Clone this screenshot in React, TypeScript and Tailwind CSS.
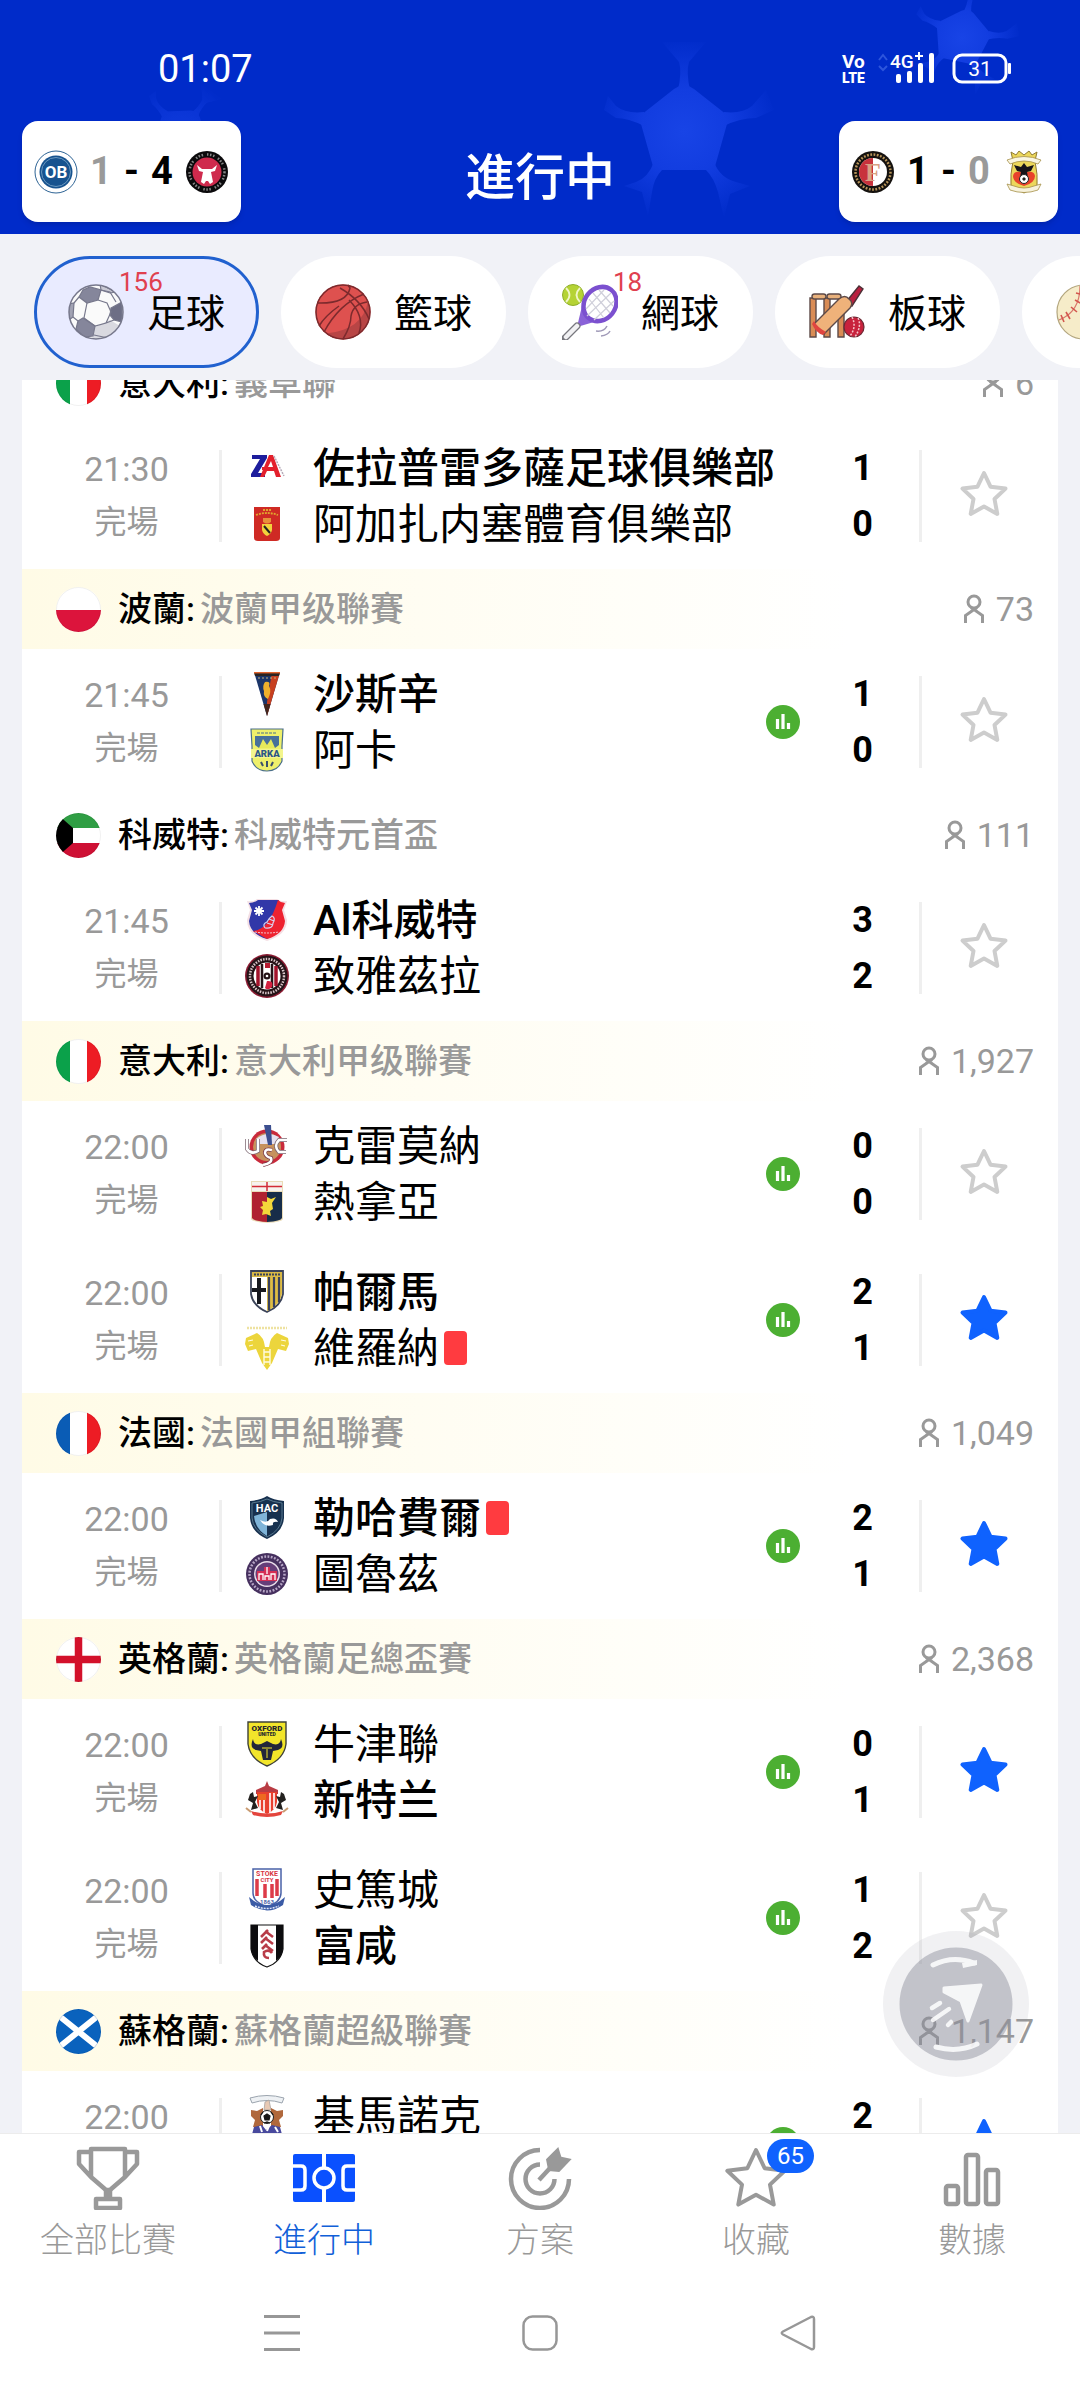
import React from 'react'

type Team = { name: string; logo: React.ReactNode; score: number; win?: boolean; red?: boolean }
type Match = { time: string; home: Team; away: Team; stats?: boolean; fav?: boolean }
type League = {
    country: string
    name: string
    flag: React.ReactNode
    viewers: string
    highlight?: boolean
    matches: Match[]
}

const STAR = 'M24 3L30.5 16.7 45.5 18.6 34.5 29 37.3 43.9 24 36.6 10.7 43.9 13.5 29 2.5 18.6 17.5 16.7Z'

function Logo({ children }: { children: React.ReactNode }) {
    return (
        <svg viewBox="0 0 44 44" className="size-11 shrink-0 overflow-visible" fontFamily="Roboto, sans-serif" textAnchor="middle">
            {children}
        </svg>
    )
}

function Flag({ id, children }: { id: string; children: React.ReactNode }) {
    return (
        <svg viewBox="0 0 45 45" className="size-[45px] shrink-0">
            <clipPath id={id}>
                <circle cx="22.5" cy="22.5" r="22.5" />
            </clipPath>
            <g clipPath={`url(#${id})`}>
                <rect width="45" height="45" fill="#fff" />
                {children}
            </g>
            <circle cx="22.5" cy="22.5" r="22" fill="none" stroke="#000" strokeOpacity=".06" />
        </svg>
    )
}

// flags
const italy = (id: string) => (
    <Flag id={id}>
        <rect width="14" height="45" fill="#0ba14a" />
        <rect x="31" width="14" height="45" fill="#ed1c24" />
    </Flag>
)
const poland = (
    <Flag id="pl">
        <rect y="23" width="45" height="22" fill="#dc143c" />
    </Flag>
)
const kuwait = (
    <Flag id="kw">
        <rect width="45" height="15" fill="#2f9e44" />
        <rect y="30" width="45" height="15" fill="#ce1034" />
        <path d="M0 0L17 15V30L0 45Z" fill="#000" />
    </Flag>
)
const france = (
    <Flag id="fr">
        <rect width="14" height="45" fill="#0a5cb5" />
        <rect x="31" width="14" height="45" fill="#ed1c24" />
    </Flag>
)
const england = (
    <Flag id="en">
        <path d="M22.5 0V45M0 22.5H45" stroke="#d3112b" strokeWidth="7.5" />
    </Flag>
)
const scotland = (
    <Flag id="sc">
        <rect width="45" height="45" fill="#0a62bd" />
        <path d="M2 6L43 39M43 6L2 39" stroke="#fff" strokeWidth="6" />
    </Flag>
)

// club crests
const zaragoza = (
    <Logo>
        <path d="M7 9H22V12L13 27H20V31H6V28L15 13H7Z" fill="#1d1d9c" />
        <path d="M24 9H28L36 31H31L29 25H22L19 31H15ZM26 15L23 21H28Z" fill="#e3202c" />
        <path d="M17 21H29V24H17Z" fill="#e3202c" />
        <path d="M29 10L39 30" stroke="#b5aab8" strokeWidth="1.5" strokeDasharray="2 1" />
    </Logo>
)
const agazzanese = (
    <Logo>
        <path d="M9 5H35V36Q35 39 31 39H13Q9 39 9 36Z" fill="#cf2a24" />
        <path d="M18 8H26M11 13Q22 9 33 13" stroke="#e0a52e" strokeWidth="1.800" fill="none" strokeDasharray="2 1" />
        <path d="M18 16H26V20Q22 23 18 20Z" fill="#e8913a" />
        <path d="M17 22H27V28Q26 32 22 34Q18 32 17 28Z" fill="#f2d33c" />
        <path d="M19 24L25 31" stroke="#222" strokeWidth="2" />
    </Logo>
)
const szczecin = (
    <Logo>
        <path d="M9 0H35L22 44Z" fill="#1b3569" />
        <path d="M27 0H35L22 44V30Z" fill="#c63f1f" />
        <path d="M18.500 32H25.500L22 44Z" fill="#44251b" />
        <path d="M9 0H35L34 4H10Z" fill="#2a2422" />
        <path d="M9 .7H35" stroke="#e0632b" strokeWidth="1.400" />
        <path d="M20 10Q26 9 24 14Q27 19 23 27Q18 25 19 19Q17 14 20 10Z" fill="#eeb02c" />
        <path d="M13 6H31" stroke="#c9b27b" strokeDasharray="2 2" />
    </Logo>
)
const arka = (
    <Logo>
        <path d="M6 1H38L37 18V33Q33 43 22 43Q11 43 7 33V18Z" fill="#eef06b" stroke="#4a6f8a" strokeWidth="1.200" />
        <path d="M10 8H34V17L30 20H14L10 17Z" fill="#47709a" />
        <path d="M14 20L18 11L22 17L26 11L30 20Z" fill="#e6e95b" />
        <path d="M12 5H32" stroke="#4a6f8a" strokeDasharray="3 1" />
        <rect x="6" y="21" width="32" height="9" fill="#f3f58d" />
        <text x="22" y="29" fontSize="9.500" fontWeight="900" fill="#2b5687">ARKA</text>
        <path d="M16 34L18 38M22 33V39M28 34L26 38" stroke="#39506b" strokeWidth="2" />
    </Logo>
)
const kuwaitSc = (
    <Logo>
        <path d="M2 3Q8 4 12 1H32Q36 4 42 3L39 12L42 22Q42 37 22 43Q2 37 2 22L5 12Z" fill="#f4dfe4" />
        <path d="M4 5Q9 5 13 2H34L24 40L22 41Q5 36 4 23L7 12Z" fill="#3137a8" />
        <path d="M33 2Q36 5 40 5L37 12L40 23Q39 36 22 41L8 33Q24 32 33 2Z" fill="#ee2230" />
        <path d="M14 8V18M9 13H19M10.500 9.500L17.500 16.500M17.500 9.500L10.500 16.500" stroke="#fff" strokeWidth="1.800" />
        <path d="M20 30Q17 26 22 24Q24 20 27 18Q31 20 28 25Q28 31 20 30M22 25L28 27M24 21L29 23" fill="none" stroke="#d9d2ee" strokeWidth="1.200" />
        <path d="M10 34Q22 36 34 34" stroke="#f3c5cf" fill="none" strokeDasharray="2 1" />
    </Logo>
)
const jazira = (
    <Logo>
        <circle cx="22" cy="22" r="22" fill="#8b1c33" />
        <circle cx="22" cy="22" r="20.500" fill="#251317" />
        <circle cx="22" cy="22" r="17" fill="none" stroke="#d9c6c9" strokeWidth="2.500" strokeDasharray="1.500 1.200" />
        <circle cx="22" cy="22" r="13.500" fill="#fff" />
        <path d="M13 12V32M31 12V32" stroke="#a3142c" strokeWidth="3.500" />
        <path d="M17 10V34M27 10V34" stroke="#251317" strokeWidth="2.500" />
        <path d="M20 9H25V14H20Z" fill="#b81c32" />
        <circle cx="22" cy="22" r="3.500" fill="#251317" />
        <circle cx="22" cy="22" r="1.300" fill="#fff" />
        <path d="M22 27Q29 26 27 33Q23 37 20 34Z" fill="#d32140" />
    </Logo>
)
const cremonese = (
    <Logo>
        <circle cx="22" cy="23" r="17.500" fill="#c92a3b" />
        <circle cx="22" cy="23" r="14" fill="#c6925d" />
        <path d="M11 15Q22 6 34 13L30 20H13Z" fill="#e5e1ef" />
        <path d="M19 1H26L27 21H23Z" fill="#3c4f8f" />
        <path d="M2 15V25Q6 31 13 27V15M42 16H34Q28 22 34 28H41" fill="none" stroke="#7b6670" strokeWidth="4" />
        <path d="M2 15V25Q6 31 13 27V15M42 16H34Q28 22 34 28H41" fill="none" stroke="#fff" strokeWidth="2.500" />
        <path d="M27 26Q20 24 20 29Q21 33 26 34Q28 39 18 41" fill="none" stroke="#7b3a48" strokeWidth="4" />
        <path d="M27 26Q20 24 20 29Q21 33 26 34Q28 39 18 41" fill="none" stroke="#fff" strokeWidth="2.500" />
    </Logo>
)
const genoa = (
    <Logo>
        <path d="M6 1H38V39Q37 42 22 43Q7 42 6 39Z" fill="#eadcb8" />
        <path d="M7 12H22V42Q8 41 7 38Z" fill="#b02230" />
        <path d="M22 12H37V38Q36 41 22 42Z" fill="#172d49" />
        <rect x="7" y="2" width="30" height="9" fill="#f7f3ee" />
        <path d="M22 2V11M7 6.500H37" stroke="#d22b37" strokeWidth="1.500" />
        <path d="M22 17L26 19L31 17L27 23L28 29L25 31L26 36L21 34L17 35L18 30L15 27L18 26L17 21L22 22Z" fill="#f4d83a" />
    </Logo>
)
const parma = (
    <Logo>
        <path d="M6 1H38V24Q36 36 22 42Q8 36 6 24Z" fill="#fff" stroke="#3b4358" strokeWidth="1.800" />
        <rect x="7" y="2" width="30" height="5" fill="#d9b945" />
        <path d="M9 4.500H35" stroke="#3b4358" strokeWidth="2" strokeDasharray="2 1" />
        <path d="M14 8V34M7 20H21" stroke="#17191f" strokeWidth="4" />
        <path d="M22 7H37V24Q35 35 22 41Z" fill="#dfbd44" />
        <path d="M24 7V40M29 7V37M34 7V32" stroke="#39415c" strokeWidth="2.200" />
    </Logo>
)
const verona = (
    <Logo>
        <path d="M2 2H42" stroke="#eee2a1" strokeWidth="2.500" strokeDasharray="2 1" />
        <path d="M1 12L12 7Q19 11 20 21H24Q25 11 32 7L43 12L44 18L41 25L33 23L27 37L22 44L17 37L11 23L3 25L0 18Z" fill="#ecd53c" />
        <path d="M19 23V39M25 23V39M19 26H25M19 31H25M19 36H25" stroke="#fffbe0" strokeWidth="1.400" />
        <path d="M3 15L8 14M41 15L36 14M4 20L8 19M40 20L36 19" stroke="#fffbe0" strokeWidth="1.200" />
    </Logo>
)
const havre = (
    <Logo>
        <path d="M22 0Q28 4 39 5V22Q38 36 22 43Q6 36 5 22V5Q16 4 22 0Z" fill="#17314f" />
        <path d="M22 3Q28 6 37 7V22Q36 34 22 41Q8 34 7 22V7Q16 6 22 3Z" fill="none" stroke="#58798f" />
        <path d="M9 20L22 16V40Q10 33 9 20Z" fill="#7fb4d8" />
        <text x="22" y="16" fontSize="11" fontWeight="700" fill="#fff">HAC</text>
        <path d="M15 24Q22 28 25 23Q31 21 33 26Q27 25 28 29Q20 32 15 24Z" fill="#fff" />
    </Logo>
)
const toulouse = (
    <Logo>
        <circle cx="22" cy="22" r="21" fill="#46305f" />
        <circle cx="22" cy="22" r="17.500" fill="none" stroke="#b7a6c6" strokeWidth="2.500" strokeDasharray="1.800 1.500" />
        <circle cx="22" cy="22" r="13" fill="#e9ddea" />
        <circle cx="22" cy="22" r="11.500" fill="#653e79" />
        <path d="M12 19H19V15H25V19H32V29H12Z" fill="#d42f55" />
        <path d="M14 28V22H18V28M20 28V24H24V28M26 28V22H30V28M22 15V22" stroke="#fff" strokeWidth="1.300" fill="none" />
    </Logo>
)
const oxford = (
    <Logo>
        <path d="M3 0H41V22Q39 37 22 44Q5 37 3 22Z" fill="#f2e52a" stroke="#3e4138" strokeWidth="1.400" />
        <text x="22" y="9" fontSize="8" fontWeight="900" fill="#24262d">OXFORD</text>
        <text x="22" y="14" fontSize="5" fontWeight="900" fill="#24262d">UNITED</text>
        <path d="M8 17Q9 24 16 22L22 19L28 22Q35 24 36 17Q40 26 33 28L28 29L26 38H18L16 29L11 28Q4 26 8 17Z" fill="#22263a" />
        <path d="M17 26H27M22 27V36" stroke="#f2e52a" />
    </Logo>
)
const sunderland = (
    <Logo>
        <path d="M22 3L24 8L33 12V16H11V12L20 8Z" fill="#b93c44" />
        <path d="M12 14H32V24Q31 32 22 36Q13 32 12 24Z" fill="#e8402f" />
        <path d="M15 21V31M19 22V35M25 15V35M29 15V31" stroke="#fff" strokeWidth="1.600" />
        <path d="M13 16H21V22H13Z" fill="#ee6a21" />
        <path d="M5 16L8 14L9 19L13 18L10 24L13 30L6 32L8 25L3 22Z" fill="#23211f" />
        <path d="M39 16L36 14L35 19L31 18L34 24L31 30L38 32L36 25L41 22Z" fill="#23211f" />
        <path d="M6 33Q22 38 38 33L36 37Q22 41 8 37Z" fill="#e4453d" />
        <path d="M1 30L6 34M43 30L38 34" stroke="#c99b72" strokeWidth="2" />
    </Logo>
)
const stoke = (
    <Logo>
        <path d="M8 1H36V25Q36 34 22 39Q8 34 8 25Z" fill="#fff" stroke="#4a62a8" strokeWidth="1.500" />
        <text x="22" y="8" fontSize="7" fontWeight="700" fill="#d8353f">STOKE</text>
        <text x="22" y="14" fontSize="6" fontWeight="700" fill="#d8353f">CITY</text>
        <path d="M12 11V28M20 16V30M27 16V30M32 11V28" stroke="#dd3b48" strokeWidth="3.500" />
        <text x="22" y="36" fontSize="6" fontWeight="700" fill="#4a62a8">1863</text>
        <path d="M4 29L9 33Q22 41 35 33L40 29L38 37Q22 48 6 37Z" fill="#3b5ba6" />
        <path d="M10 38Q22 43 34 38" stroke="#dfe6f7" fill="none" strokeWidth="1.500" strokeDasharray="2 1" />
    </Logo>
)
const fulham = (
    <Logo>
        <path d="M6 1H38V25Q36 38 22 43Q8 38 6 25Z" fill="#fff" stroke="#111" strokeWidth="1.200" />
        <path d="M6 1H13V37Q7 33 6 25ZM31 1H38V25Q37 33 31 37Z" fill="#0c0c0e" />
        <path d="M23 6L16 13M20 7L28 13M22 13L16 19M20 14L28 20M22 20L17 25M20 21L28 27M27 29Q24 25 19 28Q18 34 24 34" fill="none" stroke="#b83c48" strokeWidth="2.600" />
    </Logo>
)
const kilmarnock = (
    <Logo>
        <path d="M5 4Q22 -1 39 4L37 9Q22 4 7 9Z" fill="#eef1f4" stroke="#9ba4ae" />
        <path d="M20 8L24 6L26 16H19Z" fill="#e8c9b4" stroke="#a9a2a0" strokeWidth=".8" />
        <path d="M6 16L12 17L18 14V33H8L10 26L6 22Z" fill="#b0683c" />
        <path d="M38 16L32 17L26 14V33H36L34 26L38 22Z" fill="#b0683c" />
        <circle cx="22" cy="23" r="6.500" fill="#fff" stroke="#222" />
        <path d="M22 20L25 22L24 26H20L19 22ZM16 21L18 18M28 21L26 18M19 29L22 28L25 29" fill="#161616" stroke="#161616" strokeWidth="1.200" />
        <path d="M9 33L17 31L21 36L27 31L35 33L38 44H6Z" fill="#48499d" />
        <path d="M15 32L17 38M24 32L22 37M30 33L33 38" stroke="#fff" strokeWidth="2" fill="none" />
    </Logo>
)
const odense = (
    <Logo>
        <circle cx="22" cy="22" r="21" fill="#fff" stroke="#2e6495" strokeWidth="1" />
        <circle cx="22" cy="22" r="16.500" fill="#17538f" />
        <circle cx="22" cy="22" r="14.500" fill="none" stroke="#7fa9cc" strokeWidth=".8" />
        <text x="22" y="28" fontSize="17" fontWeight="700" fill="#fff">OB</text>
    </Logo>
)
const midtjylland = (
    <Logo>
        <circle cx="22" cy="22" r="21" fill="#0b0a0c" />
        <circle cx="22" cy="22" r="17.500" fill="none" stroke="#888" strokeWidth="2.500" strokeDasharray="1.500 1.600 1.500 1.600 1.500 4" />
        <circle cx="22" cy="22" r="14.500" fill="#cf2a4d" />
        <path d="M12 15L17 19H27L32 15L30 21L26 22L28 32L25 34L23 31H21L19 34L16 32L18 22L14 21Z" fill="#fff" />
    </Logo>
)
const feyenoord = (
    <Logo>
        <circle cx="22" cy="22" r="21" fill="#15120f" />
        <circle cx="22" cy="22" r="17.500" fill="none" stroke="#b8955a" strokeWidth="2.500" strokeDasharray="1.800 1.500" />
        <circle cx="22" cy="22" r="14" fill="#fff" />
        <path d="M22 8A14 14 0 0 0 22 36Z" fill="#c8323c" />
        <text x="22" y="31" fontSize="26" fontFamily="Liberation Serif, serif" fill="#d8a184">F</text>
    </Logo>
)
const eagles = (
    <Logo>
        <path d="M9 2L14 5L17 1L22 5L27 1L30 5L35 2L33 11Q36 25 35 36L22 43L9 36Q8 25 11 11Z" fill="#ecd75b" stroke="#907b33" strokeWidth="1" />
        <path d="M5 10Q22 3 39 10L36 14Q22 8 8 14Z" fill="#faf6e2" stroke="#a69149" strokeWidth=".8" />
        <path d="M11 26Q12 21 18 22H26Q32 21 33 26Q33 33 22 36Q11 33 11 26Z" fill="#e8412c" />
        <path d="M12 15L19 17L22 13L25 17L32 15L29 21L25 22L26 27H18L19 22L15 21Z" fill="#17141a" />
        <circle cx="22" cy="29" r="4.500" fill="#fff" stroke="#222" />
        <path d="M22 27L24 29L22 31L20 29Z" fill="#222" />
        <path d="M5 34L12 36Q22 40 32 36L39 34L36 40Q22 45 8 40Z" fill="#f7f2dc" stroke="#a69149" strokeWidth=".8" />
    </Logo>
)

const leagues: League[] = [
    {
        country: '意大利', name: '義草聯', flag: italy('it1'), viewers: '6',
        matches: [
            {
                time: '21:30',
                home: { name: '佐拉普雷多薩足球俱樂部', logo: zaragoza, score: 1, win: true },
                away: { name: '阿加扎内塞體育俱樂部', logo: agazzanese, score: 0 },
            },
        ],
    },
    {
        country: '波蘭', name: '波蘭甲级聯賽', flag: poland, viewers: '73', highlight: true,
        matches: [
            {
                time: '21:45', stats: true,
                home: { name: '沙斯辛', logo: szczecin, score: 1, win: true },
                away: { name: '阿卡', logo: arka, score: 0 },
            },
        ],
    },
    {
        country: '科威特', name: '科威特元首盃', flag: kuwait, viewers: '111',
        matches: [
            {
                time: '21:45',
                home: { name: 'Al科威特', logo: kuwaitSc, score: 3, win: true },
                away: { name: '致雅茲拉', logo: jazira, score: 2 },
            },
        ],
    },
    {
        country: '意大利', name: '意大利甲级聯賽', flag: italy('it2'), viewers: '1,927', highlight: true,
        matches: [
            {
                time: '22:00', stats: true,
                home: { name: '克雷莫納', logo: cremonese, score: 0 },
                away: { name: '熱拿亞', logo: genoa, score: 0 },
            },
            {
                time: '22:00', stats: true, fav: true,
                home: { name: '帕爾馬', logo: parma, score: 2, win: true },
                away: { name: '維羅納', logo: verona, score: 1, red: true },
            },
        ],
    },
    {
        country: '法國', name: '法國甲組聯賽', flag: france, viewers: '1,049', highlight: true,
        matches: [
            {
                time: '22:00', stats: true, fav: true,
                home: { name: '勒哈費爾', logo: havre, score: 2, win: true, red: true },
                away: { name: '圖魯茲', logo: toulouse, score: 1 },
            },
        ],
    },
    {
        country: '英格蘭', name: '英格蘭足總盃賽', flag: england, viewers: '2,368', highlight: true,
        matches: [
            {
                time: '22:00', stats: true, fav: true,
                home: { name: '牛津聯', logo: oxford, score: 0 },
                away: { name: '新特兰', logo: sunderland, score: 1, win: true },
            },
            {
                time: '22:00', stats: true,
                home: { name: '史篤城', logo: stoke, score: 1 },
                away: { name: '富咸', logo: fulham, score: 2, win: true },
            },
        ],
    },
    {
        country: '蘇格蘭', name: '蘇格蘭超級聯賽', flag: scotland, viewers: '1,147', highlight: true,
        matches: [
            {
                time: '22:00', stats: true, fav: true,
                home: { name: '基馬諾克', logo: kilmarnock, score: 2 },
                away: { name: '', logo: null, score: 2 },
            },
        ],
    },
]

// sport icons
const football = (
    <svg viewBox="0 0 56 56" className="size-14">
        <clipPath id="fb">
            <circle cx="28" cy="28" r="27" />
        </clipPath>
        <circle cx="28" cy="28" r="27" fill="#fafafa" />
        <g clipPath="url(#fb)" stroke="#77788c" strokeWidth="1.200">
            <path d="M27 43L42 36L52 42L44 56H24Z" fill="#d9d9e0" stroke="none" />
            <path d="M15 6L22 3L33 6L30 16L19 19L11 13Z" fill="#85869b" />
            <path d="M43 24L54 18V38L46 36L42 31Z" fill="#6d6e85" />
            <path d="M10 37L15 34L27 42L25 52L16 53L8 45Z" fill="#85869b" />
            <path d="M0 20L6 19L5 33L1 36Z" fill="#a1a2b3" />
            <path d="M32 0L48 8L42 9L33 6Z" fill="#c9c9d4" />
            <path d="M30 16L39 19L43 28L38 39L27 42L16 34L19 19M33 6L42 8L48 18M38 39L46 36M6 19L11 13M5 33L10 37M26 51L40 54" fill="none" />
        </g>
        <circle cx="28" cy="28" r="27" fill="none" stroke="#77788c" strokeWidth="1.500" />
    </svg>
)
const basketball = (
    <svg viewBox="0 0 56 56" className="size-14">
        <circle cx="28" cy="28" r="27.500" fill="#de514f" />
        <path d="M53 17A27.500 27.500 0 0 1 11 49.500Q48 46 53 17Z" fill="#b84545" />
        <g fill="none" stroke="#7c2a2d" strokeWidth="1.500">
            <circle cx="28" cy="28" r="27" />
            <path d="M2 19Q32 20 35 4L33 1M25 4Q46 16 54 35M9 48Q24 20 49 10M28 55Q36 42 36 32Q38 20 52 18M4 42Q10 32 24 22M44 49Q50 32 34 16" />
        </g>
    </svg>
)
const tennis = (
    <svg viewBox="0 0 56 56" className="size-14">
        <circle cx="11" cy="11" r="10.500" fill="#b5d334" stroke="#8fae2a" />
        <path d="M4 4Q11 11 4 18M18 4Q11 11 18 18" fill="none" stroke="#f0f6c8" strokeWidth="1.800" />
        <path d="M20 22L15 43L32 38Z" fill="#8a62d8" />
        <ellipse cx="38" cy="20" rx="15.500" ry="18" transform="rotate(38 38 20)" fill="#fff" stroke="#7b50cf" strokeWidth="4.500" />
        <path d="M27 15L42 34M31 9L48 29M37 6L51 22M24 25L42 6M25 32L49 9M32 36L52 17" stroke="#cfcfda" strokeWidth="1.200" />
        <path d="M15 42L3 54" stroke="#77777d" strokeWidth="7" strokeLinecap="round" />
        <path d="M15 42L4 53" stroke="#f1f1f3" strokeWidth="4.500" strokeLinecap="round" />
        <path d="M34 47Q42 48 45 42M39 52Q46 51 48 47" fill="none" stroke="#a09ab8" strokeWidth="1.500" />
    </svg>
)
const cricket = (
    <svg viewBox="0 0 56 56" className="size-14">
        <g fill="#d98c55" stroke="#5d4a48" strokeWidth="1.400">
            <path d="M1 14H7V53H1ZM15 14H21V53H15ZM29 14H35V53H29Z" />
            <rect x="3" y="10" width="14" height="5" rx="2.500" fill="#e8b17c" />
            <rect x="18" y="10" width="14" height="5" rx="2.500" fill="#e8b17c" />
        </g>
        <path d="M37 18L50 2L54 5L43 22Z" fill="#b9203f" stroke="#4d3036" strokeWidth="1.400" />
        <path d="M5 40L30 15Q36 10 40 15Q45 19 41 24L15 50Q10 49 5 40Z" fill="#efb27a" stroke="#5d4a48" strokeWidth="1.400" />
        <path d="M5 37Q8 43 17 48L14 51Q7 49 3 40Z" fill="#e0453f" />
        <circle cx="45" cy="43" r="10" fill="#c8223d" stroke="#6b2733" strokeWidth="1.200" />
        <path d="M43 33Q48 43 41 52M49 34Q53 42 46 53" fill="none" stroke="#f5c1c8" strokeWidth="1.500" strokeDasharray="2 1.500" />
    </svg>
)
const baseball = (
    <svg viewBox="0 0 56 56" className="size-14">
        <circle cx="28" cy="28" r="27" fill="#f6ecc9" stroke="#b3a67e" strokeWidth="1.200" />
        <path d="M3 36Q24 28 24 2" fill="none" stroke="#d9766a" strokeWidth="1.200" />
        <path d="M5 31L8 38M10 28L14 35M15 23L21 28M19 16L26 20M20 9L28 11" stroke="#d3564e" strokeWidth="1.600" />
    </svg>
)

const sports = [
    { name: '足球', icon: football, live: '156', active: true },
    { name: '籃球', icon: basketball },
    { name: '網球', icon: tennis, live: '18' },
    { name: '板球', icon: cricket },
    { name: '棒球', icon: baseball },
]

const tabs = [
    {
        name: '全部比賽',
        icon: (
            <svg viewBox="0 0 64 64" className="size-16" fill="none" stroke="currentColor" strokeWidth="4.500" strokeLinejoin="round">
                <path d="M15 3H49V31L34 44H30L15 31ZM15 6H3V18L15 31M49 6H61V18L49 31" />
                <path d="M30 44V53M34 44V53M20 53H44V62H20Z" />
            </svg>
        ),
    },
    {
        name: '進行中',
        active: true,
        icon: (
            <svg viewBox="0 0 64 64" className="size-16" fill="none">
                <rect x="1" y="8" width="62" height="48" rx="2" fill="#0a50ff" />
                <path d="M32 8V56" stroke="#fff" strokeWidth="4" />
                <circle cx="32" cy="32" r="10" fill="#0a50ff" stroke="#fff" strokeWidth="3.500" />
                <path d="M1 20H9Q13 20 13 24V40Q13 44 9 44H1M63 20H55Q51 20 51 24V40Q51 44 55 44H63" stroke="#fff" strokeWidth="3.500" />
            </svg>
        ),
    },
    {
        name: '方案',
        icon: (
            <svg viewBox="0 0 64 64" className="size-16" fill="none" stroke="currentColor" strokeWidth="4.500">
                <path d="M32 4A29 29 0 1 0 61 33M32 18.500A14.500 14.500 0 1 0 46.500 33" />
                <path d="M31 34L43 21" />
                <path d="M50.300 1L53.300 10.700L63.700 13L51.300 26L40.300 25L38 13.300Z" fill="currentColor" stroke="none" />
            </svg>
        ),
    },
    {
        name: '收藏',
        badge: '65',
        icon: (
            <svg viewBox="0 0 48 48" className="size-16" fill="none" stroke="currentColor" strokeWidth="3" strokeLinejoin="round">
                <path d={STAR} />
            </svg>
        ),
    },
    {
        name: '數據',
        icon: (
            <svg viewBox="0 0 64 64" className="size-16" fill="none" stroke="currentColor" strokeWidth="4.500">
                <rect x="6" y="40" width="12" height="18" rx="2" />
                <rect x="26" y="9" width="12" height="49" rx="2" />
                <rect x="46" y="24" width="12" height="34" rx="2" />
            </svg>
        ),
    },
]

function StatusBar() {
    return (
        <div className="flex h-[138px] items-center justify-between pr-[68px] pl-[158px]">
            <span className="text-[38px]">01:07</span>
            <svg viewBox="0 0 170 34" className="h-[34px] w-[170px] overflow-visible" fill="#fff" fontFamily="Roboto, sans-serif">
                <text x="0" y="16" fontSize="19" fontWeight="700">Vo</text>
                <text x="0" y="31" fontSize="14" fontWeight="900">LTE</text>
                <path d="M37 8L41 3L45 8M37 14L41 18L45 14" fill="none" stroke="#2d55dc" strokeWidth="2" />
                <text x="48" y="16" fontSize="19" fontWeight="500">4G</text>
                <path d="M73 4H81M77 0V8" stroke="#fff" strokeWidth="2" />
                <rect x="54" y="22" width="5" height="9" rx="2" />
                <rect x="65" y="19" width="5" height="12" rx="2" />
                <rect x="76" y="11" width="5" height="20" rx="2" />
                <rect x="87" y="1" width="5" height="30" rx="2" />
                <rect x="112" y="3" width="52" height="27" rx="8" fill="none" stroke="#fff" strokeWidth="3" />
                <rect x="166" y="11" width="3" height="11" rx="1" />
                <text x="138" y="24" fontSize="21" textAnchor="middle">31</text>
            </svg>
        </div>
    )
}

// faded balls behind the title
function HeaderArt() {
    return (
        <svg viewBox="0 0 1080 234" preserveAspectRatio="xMidYMid slice" className="absolute inset-0 size-full">
            <defs>
                <radialGradient id="ball" gradientUnits="userSpaceOnUse" cx="0" cy="0" r="95">
                    <stop offset="0" stopColor="#1844e6" />
                    <stop offset=".45" stopColor="#123de0" />
                    <stop offset="1" stopColor="#002bc9" />
                </radialGradient>
                <g id="patch" fill="url(#ball)">
                    <path d="M0 -50Q5 -45 10 -43L43 -17Q45 -14 43 -8L30 38H-30L-43 -8Q-45 -14 -43 -17L-10 -43Q-5 -45 0 -50Z" />
                    <path d="M-6 -42Q-2 -60 -5 -70L-22 -90H22L5 -70Q2 -60 6 -42Z" />
                    <path d="M40 -20Q58 -18 68 -26L82 -42L90 -22L72 -14Q56 -14 40 -6Z" />
                    <path d="M-40 -20Q-58 -18 -68 -26L-76 -36L-80 -22L-68 -14Q-56 -14 -40 -6Z" />
                    <path d="M30 30Q36 46 52 50L66 54L46 62L40 86L34 60Q30 46 22 38Z" />
                    <path d="M-30 30Q-36 46 -48 50L-60 54L-42 60L-36 84L-32 60Q-30 46 -22 38Z" />
                </g>
            </defs>
            <use href="#patch" transform="translate(684 132)" />
            <use href="#patch" transform="translate(962 38) rotate(12) scale(.62)" />
            <use href="#patch" transform="translate(180 135) rotate(36) scale(.6)" opacity=".6" />
        </svg>
    )
}

function ScoreCard({ home, away, homeLogo, awayLogo }: { home: number; away: number; homeLogo: React.ReactNode; awayLogo: React.ReactNode }) {
    return (
        <button className="flex h-[101px] w-[219px] items-center justify-between rounded-2xl bg-white px-3 text-[38px] font-bold text-black shadow-md">
            {homeLogo}
            <span className={home < away ? 'text-[#9a9a9a]' : ''}>{home}</span>
            <span>-</span>
            <span className={away < home ? 'text-[#9a9a9a]' : ''}>{away}</span>
            {awayLogo}
        </button>
    )
}

function TeamLine({ team }: { team: Team }) {
    return (
        <div className="flex h-14 items-center">
            {team.logo}
            <span className={team.win ? 'ml-6 text-[42px] font-medium whitespace-nowrap' : 'ml-6 text-[42px] whitespace-nowrap'}>
                {team.name}
            </span>
            {team.red && <span className="ml-[5px] h-[34px] w-[23px] rounded-[4px] bg-[#ff3b40]" />}
        </div>
    )
}

function MatchRow({ match }: { match: Match }) {
    return (
        <li className="flex items-center py-[17px]">
            <div className="w-[197px] pl-3 text-center text-[#999]">
                <div className="text-[34px] leading-[53px]">{match.time}</div>
                <div className="text-[32px] leading-[53px]">完場</div>
            </div>
            <div className="h-[92px] w-[3px] bg-[#efefef]" />
            <div className="ml-[23px] min-w-0 flex-1">
                <TeamLine team={match.home} />
                <TeamLine team={match.away} />
            </div>
            {match.stats && (
                <svg viewBox="0 0 34 34" className="size-[34px] shrink-0">
                    <circle cx="17" cy="17" r="17" fill="#4caf32" />
                    <path d="M11.500 14V24M17 9V24M22.500 18V24" stroke="#fff" strokeWidth="3.200" />
                </svg>
            )}
            <div className="w-[119px] shrink-0 pl-1.5 text-center text-[36px] leading-[56px] font-bold">
                <div>{match.home.score}</div>
                <div>{match.away.score}</div>
            </div>
            <div className="h-[92px] w-[3px] bg-[#efefef]" />
            <div className="flex w-[136px] shrink-0 justify-center pr-3">
                <button aria-label="收藏" aria-pressed={!!match.fav}>
                    <svg viewBox="0 2 48 48" className="size-12 overflow-visible" strokeWidth="4" strokeLinejoin="round">
                        <path d={STAR} fill={match.fav ? '#0f62fe' : 'none'} stroke={match.fav ? '#0f62fe' : '#cdcdcd'} />
                    </svg>
                </button>
            </div>
        </li>
    )
}

function LeagueBlock({ league }: { league: League }) {
    return (
        <section>
            <div
                className={
                    league.highlight
                        ? 'flex h-20 items-center bg-linear-to-r from-[#fffbe6] to-white to-80% pr-6 pl-[34px]'
                        : 'flex h-20 items-center pr-6 pl-[34px]'
                }
            >
                {league.flag}
                <h2 className="ml-[17px] flex-1 text-[34px] font-medium">
                    {league.country}:<span className="ml-[5px] text-[#999]">{league.name}</span>
                </h2>
                <svg viewBox="0 0 20 30" className="h-[30px] w-5" fill="none" stroke="#999" strokeWidth="3">
                    <circle cx="10" cy="8" r="6" />
                    <path d="M1.500 29V21.500L10 15.500L18.500 21.500V29M7 13.500L13 17.500M13 13.500L7 17.500" />
                </svg>
                <span className="ml-3 text-[34px] text-[#999]">{league.viewers}</span>
            </div>
            <ul>
                {league.matches.map((m, i) => (
                    <MatchRow key={i} match={m} />
                ))}
            </ul>
        </section>
    )
}

export default function App() {
    return (
        <div className="flex h-screen flex-col overflow-hidden bg-[#f1f2f7] font-['Roboto','Noto_Sans_CJK_SC',sans-serif] text-black">
            <header className="relative h-[234px] shrink-0 bg-[#002bc9] text-white">
                <HeaderArt />
                <div className="relative -mb-[17px]">
                    <StatusBar />
                </div>
                <div className="relative flex items-center justify-between px-[22px]">
                    <ScoreCard home={1} away={4} homeLogo={odense} awayLogo={midtjylland} />
                    <h1 className="pt-3 text-[50px] leading-none font-medium">進行中</h1>
                    <ScoreCard home={1} away={0} homeLogo={feyenoord} awayLogo={eagles} />
                </div>
            </header>

            <nav className="flex shrink-0 gap-[22px] overflow-hidden pt-[22px] pb-3 pl-[34px]">
                {sports.map((s) => (
                    <button
                        key={s.name}
                        className={
                            s.active
                                ? 'relative flex h-[112px] w-[225px] shrink-0 items-center rounded-full border-3 border-[#2161cf] bg-[#e9ebff] px-[31px]'
                                : 'relative flex h-[112px] w-[225px] shrink-0 items-center rounded-full bg-white px-[34px]'
                        }
                    >
                        {s.icon}
                        <span className="ml-[23px] pt-1 text-[39px]">{s.name}</span>
                        {s.live && (
                            <span className={s.active ? 'absolute top-1 left-[82px] text-[26px] text-[#e0404f]' : 'absolute top-[7px] left-[85px] text-[26px] text-[#e0404f]'}>
                                {s.live}
                            </span>
                        )}
                    </button>
                ))}
            </nav>

            <main className="relative min-h-0 flex-1">
                <div className="mx-[22px] h-full overflow-hidden bg-white">
                    <div className="-mt-[37px]">
                        {leagues.map((l, i) => (
                            <LeagueBlock key={i} league={l} />
                        ))}
                    </div>
                </div>
                <button aria-label="直播" className="absolute right-[51px] bottom-14 size-[146px]">
                    <svg viewBox="0 0 146 146" fill="none">
                        <circle cx="73" cy="73" r="73" fill="#8c8e9b" fillOpacity=".12" />
                        <circle cx="73" cy="73" r="56.500" fill="#8c8e9b" fillOpacity=".47" />
                        <g opacity=".85">
                            <path d="M50 34Q70 24 91 32" stroke="#fff" strokeWidth="5" strokeLinecap="round" />
                            <path d="M79 32L94 29V34L80 37Z" fill="#fff" />
                            <path d="M53 116Q75 122 94 113" stroke="#fff" strokeWidth="5" strokeLinecap="round" />
                            <path d="M61 57L98 54L85 90L78 70L61 61Z" fill="#fff" stroke="#fff" strokeWidth="3" strokeLinejoin="round" />
                            <path d="M49 77L57 72M50 89L66 78M65 94L68 91" stroke="#fff" strokeWidth="4.500" strokeLinecap="round" />
                        </g>
                    </svg>
                </button>
            </main>

            <footer className="shrink-0 border-t border-[#ececec] bg-white">
                <nav className="flex pt-3">
                    {tabs.map((t) => (
                        <a
                            key={t.name}
                            href="#"
                            className={
                                t.active
                                    ? 'flex flex-1 flex-col items-center text-[34px] leading-[60px] font-light text-[#1160d8]'
                                    : 'flex flex-1 flex-col items-center text-[34px] leading-[60px] font-light text-[#999]'
                            }
                        >
                            <span className="relative">
                                {t.icon}
                                {t.badge && (
                                    <span className="absolute -top-[7px] left-[43px] flex h-[34px] w-[47px] items-center justify-center rounded-full bg-[#0f62fe] text-2xl font-normal text-white">
                                        {t.badge}
                                    </span>
                                )}
                            </span>
                            {t.name}
                        </a>
                    ))}
                </nav>
                <div className="flex h-[130px] items-center justify-center gap-[222px] pb-1 text-[#979797]">
                    <button aria-label="選單">
                        <svg viewBox="0 0 36 36" className="size-9" stroke="currentColor" strokeWidth="3">
                            <path d="M0 1.500H36M0 18H36M0 34.500H36" />
                        </svg>
                    </button>
                    <button aria-label="主頁">
                        <svg viewBox="0 0 36 36" className="size-9" fill="none" stroke="currentColor" strokeWidth="2.500">
                            <rect x="1.500" y="1.500" width="33" height="33" rx="9" />
                        </svg>
                    </button>
                    <button aria-label="返回">
                        <svg viewBox="0 0 36 36" className="size-9" fill="none" stroke="currentColor" strokeWidth="2.500" strokeLinejoin="round">
                            <path d="M3 16.500L31 2Q34 1 34 4V32Q34 35 31 34L3 19.500Q.5 18 3 16.500Z" />
                        </svg>
                    </button>
                </div>
            </footer>
        </div>
    )
}
